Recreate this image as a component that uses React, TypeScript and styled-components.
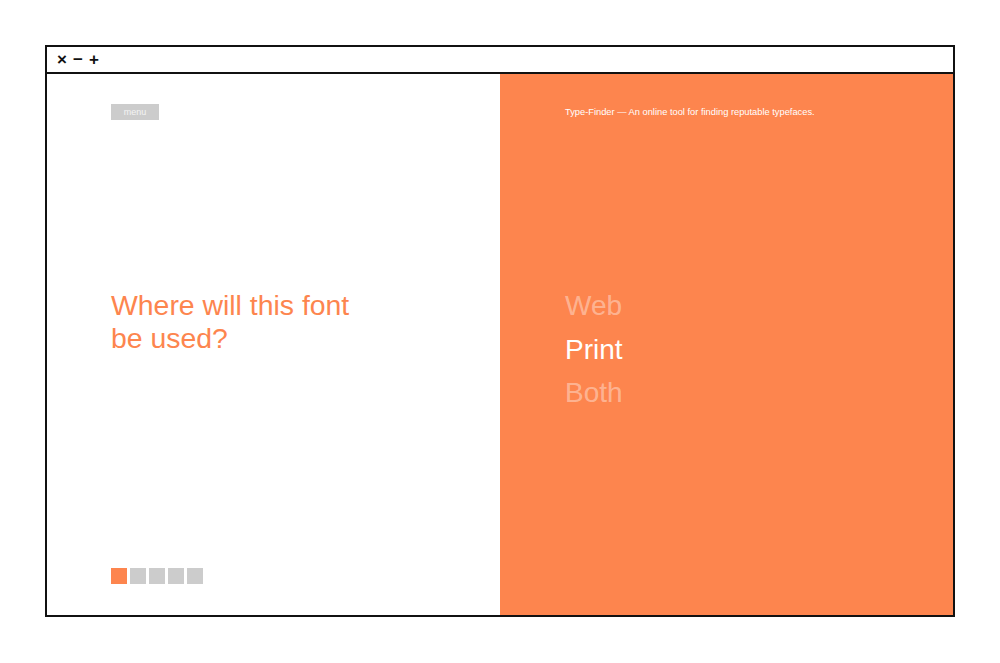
import React, {FC, useState} from 'react';
import styled, {createGlobalStyle} from 'styled-components';

const ORANGE = '#fd854e';

const GlobalStyle = createGlobalStyle`
  html, body {
    margin: 0;
    padding: 0;
    background: #fff;
  }

  body {
    font-family: "Liberation Sans", Arial, sans-serif;
  }
`;

const Window = styled.div`
  box-sizing: border-box;
  margin: 45px 0 0 45px;
  width: 910px;
  height: 572px;
  border: 2px solid #111;
  display: flex;
  flex-direction: column;
`;

const TitleBar = styled.div`
  height: 25px;
  border-bottom: 2px solid #111;
  display: flex;
  align-items: center;
  gap: 4px;
  padding-left: 9px;
  flex-shrink: 0;
`;

const Control = styled.span`
  font-size: 17px;
  line-height: 16px;
  font-weight: 700;
  color: #111;
  width: 12px;
  text-align: center;
`;

const Body = styled.div`
  flex: 1;
  display: grid;
  grid-template-columns: 453px 1fr;
  min-height: 0;
`;

const LeftPanel = styled.section`
  display: flex;
  flex-direction: column;
  align-items: flex-start;
  padding: 30px 0 31px 64px;
`;

const MenuButton = styled.button`
  width: 48px;
  height: 16px;
  padding: 0;
  border: none;
  background: #cccccc;
  color: #f4f4f4;
  font-family: "Liberation Sans", Arial, sans-serif;
  font-size: 9px;
  cursor: pointer;
`;

const Question = styled.h1`
  margin: 169px 0 0;
  font-size: 28.4px;
  line-height: 33px;
  font-weight: 400;
  color: ${ORANGE};
`;

const Pager = styled.div`
  margin-top: auto;
  display: flex;
  gap: 3px;
`;

const PagerStep = styled.span<{ $active?: boolean }>`
  width: 16px;
  height: 16px;
  background: ${p => (p.$active ? ORANGE : '#cccccc')};
`;

const RightPanel = styled.section`
  background: ${ORANGE};
  padding: 33px 0 0 65px;
  display: flex;
  flex-direction: column;
`;

const Tagline = styled.p`
  margin: 0;
  font-size: 9.3px;
  line-height: 10px;
  color: #fff;
`;

const Options = styled.ul`
  list-style: none;
  margin: 167px 0 0;
  padding: 0;
`;

const Option = styled.li<{ $selected?: boolean }>`
  font-size: 28px;
  line-height: 43.5px;
  color: ${p => (p.$selected ? '#fff' : 'rgba(255, 255, 255, 0.4)')};
  cursor: pointer;
`;

const choices = ['Web', 'Print', 'Both'];

const App: FC = () => {
  const [selected, setSelected] = useState('Print');

  return (
    <>
      <GlobalStyle />
      <Window>
        <TitleBar>
          <Control>×</Control>
          <Control>−</Control>
          <Control>+</Control>
        </TitleBar>
        <Body>
          <LeftPanel>
            <MenuButton type="button">menu</MenuButton>
            <Question>
              Where will this font
              <br />
              be used?
            </Question>
            <Pager>
              {[0, 1, 2, 3, 4].map(i => (
                <PagerStep key={i} $active={i === 0} />
              ))}
            </Pager>
          </LeftPanel>
          <RightPanel>
            <Tagline>Type-Finder — An online tool for finding reputable typefaces.</Tagline>
            <Options>
              {choices.map(choice => (
                <Option
                  key={choice}
                  $selected={choice === selected}
                  onClick={() => setSelected(choice)}
                >
                  {choice}
                </Option>
              ))}
            </Options>
          </RightPanel>
        </Body>
      </Window>
    </>
  );
};

export default App;
